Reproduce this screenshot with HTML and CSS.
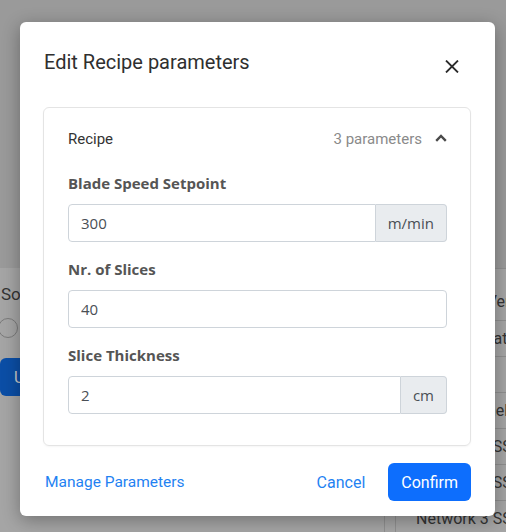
FILE: index.html
```html
<!DOCTYPE html>
<html lang="en">
<head>
<meta charset="utf-8">
<title>Edit Recipe parameters</title>
<link rel="stylesheet" href="styles.css">
</head>
<body>
<div class="page">
  <section class="bg-card bg-left">
    <div class="bg-heading">Source</div>
    <div class="bg-switch"></div>
    <button class="bg-btn">Upload</button>
  </section>
  <section class="bg-card bg-right">
    <div class="bg-table">
      <div class="bg-row bg-row-head">Firmware Version</div>
      <div class="bg-row">Device Location</div>
      <div class="bg-row"></div>
      <div class="bg-row">Mobile Panel SSID</div>
      <div class="bg-row">Network 1 SSID</div>
      <div class="bg-row">Network 2 SSID</div>
      <div class="bg-row">Network 3 SSID</div>
    </div>
  </section>
</div>

<div class="modal" role="dialog">
  <div class="modal-header">
    <h2 class="modal-title">Edit Recipe parameters</h2>
    <button class="close-btn" aria-label="Close">
      <svg width="14" height="13" viewBox="0 0 14 13"><path d="M1 0.5 L13 12.5 M13 0.5 L1 12.5" stroke="#2b2b2b" stroke-width="1.8" fill="none"/></svg>
    </button>
  </div>
  <div class="modal-body">
    <div class="group-card">
      <div class="group-header">
        <span class="group-name">Recipe</span>
        <span class="group-meta">
          <span class="group-count">3 parameters</span>
          <svg class="chevron" width="12" height="8" viewBox="0 0 12 8"><path d="M1.2 6.8 L6 2 L10.8 6.8" stroke="#4a4a4a" stroke-width="2.4" fill="none"/></svg>
        </span>
      </div>
      <div class="field">
        <label class="field-label">Blade Speed Setpoint</label>
        <div class="input-group">
          <input class="form-input" value="300">
          <span class="addon">m/min</span>
        </div>
      </div>
      <div class="field">
        <label class="field-label">Nr. of Slices</label>
        <div class="input-group">
          <input class="form-input solo" value="40">
        </div>
      </div>
      <div class="field">
        <label class="field-label">Slice Thickness</label>
        <div class="input-group">
          <input class="form-input" value="2">
          <span class="addon">cm</span>
        </div>
      </div>
    </div>
  </div>
  <div class="modal-footer">
    <a class="manage-link" href="#">Manage Parameters</a>
    <div class="actions">
      <button class="btn-cancel">Cancel</button>
      <button class="btn-primary">Confirm</button>
    </div>
  </div>
</div>
</body>
</html>
```
FILE: styles.css
```css
* { box-sizing: border-box; }

html, body {
  margin: 0;
  padding: 0;
}

body {
  width: 506px;
  height: 532px;
  overflow: hidden;
  background: #9a9a9a;
  font-family: Roboto, "Liberation Sans", sans-serif;
  position: relative;
}

/* ---------- dimmed background page ---------- */
.page {
  display: grid;
  grid-template-columns: 385px 1fr;
  padding-top: 268px;
  height: 532px;
  overflow: hidden;
}

.bg-card {
  background: #a5a5a5;
  overflow: hidden;
}

.bg-left {
  padding-top: 14px;
  border-right: 1px solid #8f8f8f;
}

.bg-heading {
  font-size: 17px;
  line-height: 24px;
  color: #333;
  padding-left: 1px;
}

.bg-switch {
  width: 20px;
  height: 20px;
  margin-top: 12px;
  margin-left: -2px;
  border: 1px solid #7a7a7a;
  border-radius: 50%;
}

.bg-btn {
  display: block;
  margin-top: 20px;
  height: 38px;
  width: 110px;
  border: none;
  border-radius: 6px;
  background: #0b4ea6;
  color: #c9c9c9;
  font-family: Roboto, "Liberation Sans", sans-serif;
  font-size: 16px;
  text-align: left;
  padding-left: 14px;
}

.bg-right {
  padding-left: 10px;
}

.bg-table {
  border-left: 1px solid #8f8f8f;
  border-top: 1px solid #8f8f8f;
}

.bg-row {
  height: 36px;
  display: flex;
  align-items: center;
  padding-left: 20px;
  font-size: 16px;
  color: #333;
  white-space: nowrap;
  border-bottom: 1px solid #8f8f8f;
}

.bg-row-head {
  height: 52px;
  align-items: flex-end;
  padding-bottom: 9px;
}

/* ---------- modal ---------- */
.modal {
  position: absolute;
  left: 20px;
  top: 22px;
  width: 475px;
  background: #fff;
  border-radius: 6px;
  box-shadow: 0 4px 18px rgba(0, 0, 0, 0.32);
}

.modal-header {
  display: flex;
  justify-content: space-between;
  align-items: flex-start;
  height: 54px;
  padding: 26px 24px 0 24px;
}

.modal-title {
  margin: 0;
  font-size: 20px;
  line-height: 28px;
  font-weight: 400;
  color: #2f2f2f;
}

.close-btn {
  width: 24px;
  height: 20px;
  margin-top: 8px;
  margin-right: 7px;
  padding: 0;
  border: none;
  background: transparent;
  display: flex;
  align-items: center;
  justify-content: center;
}

.modal-body {
  padding: 31px 24px 0 23px;
}

.group-card {
  border: 1px solid #e4e4e4;
  border-radius: 6px;
  padding: 0 23px 31px 24px;
  box-shadow: 0 1px 2px rgba(0, 0, 0, 0.04);
}

.group-header {
  display: flex;
  justify-content: space-between;
  align-items: center;
  padding: 21px 0 23px 0;
  line-height: 20px;
}

.group-name {
  font-size: 15px;
  color: #333;
}

.group-meta {
  display: flex;
  align-items: center;
  gap: 13px;
}

.group-count {
  font-size: 15px;
  color: #8a8a8a;
}

.chevron {
  display: block;
  margin-top: -3px;
}

.field + .field {
  margin-top: 16px;
}

.field-label {
  display: block;
  font-family: "Open Sans", "Noto Sans", sans-serif;
  font-weight: 700;
  font-size: 15px;
  line-height: 22px;
  color: #555;
  margin-bottom: 10px;
}

.input-group {
  display: flex;
  height: 38px;
}

.form-input {
  flex: 1;
  min-width: 0;
  height: 38px;
  border: 1px solid #ced4da;
  border-radius: 4px 0 0 4px;
  padding: 0 12px;
  font-family: "Open Sans", "Noto Sans", sans-serif;
  font-size: 15px;
  color: #4a4f55;
  background: #fff;
  outline: none;
}

.form-input.solo {
  border-radius: 4px;
}

.addon {
  display: flex;
  align-items: center;
  padding: 0 12px;
  border: 1px solid #ced4da;
  border-left: none;
  border-radius: 0 4px 4px 0;
  background: #e9ecef;
  font-family: "Open Sans", "Noto Sans", sans-serif;
  font-size: 15px;
  color: #4a4f55;
}

.modal-footer {
  display: flex;
  justify-content: space-between;
  align-items: center;
  margin-top: 17px;
  padding: 0 24px 15px 24px;
}

.manage-link {
  font-size: 15.5px;
  color: #1f82f2;
  text-decoration: none;
  padding-left: 1px;
}

.actions {
  display: flex;
  align-items: center;
  gap: 23px;
}

.btn-cancel {
  border: none;
  background: transparent;
  padding: 0;
  font-family: Roboto, "Liberation Sans", sans-serif;
  font-size: 16px;
  color: #1f82f2;
}

.btn-primary {
  height: 38px;
  padding: 0 13px;
  border: none;
  border-radius: 6px;
  background: #0d6efd;
  color: #fff;
  font-family: Roboto, "Liberation Sans", sans-serif;
  font-size: 16px;
}
```
